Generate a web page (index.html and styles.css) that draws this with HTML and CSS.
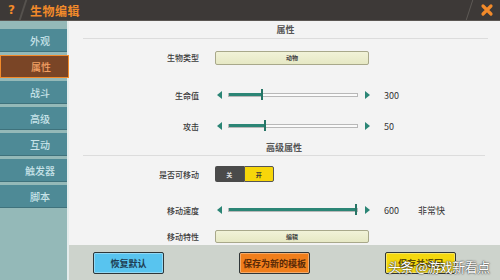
FILE: index.html
```html
<!DOCTYPE html>
<html lang="zh">

<head>
    <meta charset="UTF-8">
    <title>生物编辑</title>
    <link rel="stylesheet" href="styles.css">
</head>

<body>
    <div class="app">
        <!-- top bar -->
        <div class="topbar">
            <span class="help">?</span>
            <span class="slash"></span>
            <span class="title">生物编辑</span>
            <span class="spacer"></span>
            <span class="slash slash-r"></span>
            <svg class="close" width="14" height="14" viewBox="0 0 14 14">
                <path d="M3 3 L11 11 M11 3 L3 11" stroke="#f28a2a" stroke-width="3.2" stroke-linecap="round" />
            </svg>
        </div>

        <div class="content">
            <!-- tabs -->
            <div class="sidebar">
                <div class="tab">外观</div>
                <div class="tab active">属性</div>
                <div class="tab">战斗</div>
                <div class="tab">高级</div>
                <div class="tab">互动</div>
                <div class="tab">触发器</div>
                <div class="tab">脚本</div>
            </div>
            <div class="divider"></div>

            <div class="main">
                <div class="panel">
                    <div class="section-title">属性</div>

                    <div class="row row-type">
                        <span class="label">生物类型</span>
                        <div class="box">动物</div>
                    </div>

                    <div class="row row-hp">
                        <span class="label">生命值</span>
                        <div class="slider">
                            <span class="arr arr-l"></span>
                            <div class="track"><div class="fill" style="width:26%"></div></div>
                            <span class="arr arr-r"></span>
                        </div>
                        <span class="value">300</span>
                    </div>

                    <div class="row row-atk">
                        <span class="label">攻击</span>
                        <div class="slider">
                            <span class="arr arr-l"></span>
                            <div class="track"><div class="fill" style="width:28%"></div></div>
                            <span class="arr arr-r"></span>
                        </div>
                        <span class="value">50</span>
                    </div>

                    <div class="section-title section-adv">高级属性</div>

                    <div class="row row-move">
                        <span class="label">是否可移动</span>
                        <div class="toggle">
                            <span class="off">关</span>
                            <span class="on">开</span>
                        </div>
                    </div>

                    <div class="row row-speed">
                        <span class="label">移动速度</span>
                        <div class="slider">
                            <span class="arr arr-l"></span>
                            <div class="track"><div class="fill" style="width:99%"></div></div>
                            <span class="arr arr-r"></span>
                        </div>
                        <span class="value">600</span>
                        <span class="extra">非常快</span>
                    </div>

                    <div class="row row-trait">
                        <span class="label">移动特性</span>
                        <div class="box box-sm">编辑</div>
                    </div>
                </div>

                <div class="footer">
                    <button class="btn btn-blue">恢复默认</button>
                    <button class="btn btn-orange">保存为新的模板</button>
                    <button class="btn btn-yellow">保存并返回</button>
                    <span class="watermark">头条 @游戏新看点</span>
                </div>
            </div>
        </div>
    </div>
</body>

</html>
```

FILE: styles.css
```css
body {
    margin: 0;
    font-family: "Noto Sans CJK SC", "Noto Sans", sans-serif;
    background: #3c3836;
}

.app {
    width: 500px;
    height: 280px;
    display: flex;
    flex-direction: column;
    overflow: hidden;
}

/* top bar */
.topbar {
    height: 20px;
    background: #3d3937;
    display: flex;
    align-items: center;
    border-bottom: 1px solid #5a5652;
}

.help {
    color: #f28a2a;
    font-family: "DejaVu Sans", sans-serif;
    font-weight: bold;
    font-size: 12px;
    margin-left: 8px;
    width: 10px;
}

.slash {
    width: 2px;
    height: 20px;
    background: #56524e;
    transform: skewX(-18deg);
    margin-left: 4px;
}

.title {
    color: #f28a2a;
    font-weight: bold;
    font-size: 12px;
    margin-left: 6px;
    letter-spacing: 0.5px;
}

.spacer {
    flex: 1;
}

.slash-r {
    background: #5e5a56;
    width: 1px;
    margin-right: 10px;
}

.close {
    margin-right: 6px;
}

.content {
    flex: 1;
    display: flex;
}

/* sidebar */
.sidebar {
    width: 67px;
    background: #94b9b8;
    padding-top: 8px;
}

.tab {
    height: 22px;
    margin-bottom: 3px;
    background: #4e8a96;
    border-bottom: 1px solid #3f727c;
    color: #c6e2e8;
    font-size: 10px;
    font-weight: 500;
    display: flex;
    align-items: center;
    justify-content: center;
    padding-left: 13px;
}

.tab.active {
    background: #7a4526;
    color: #f3a064;
    border: 1px solid #f28a2a;
    height: 21px;
    margin-right: -2px;
    position: relative;
}

.divider {
    width: 2px;
    background: #e4ecec;
}

.main {
    flex: 1;
    display: flex;
    flex-direction: column;
}

/* panel */
.panel {
    height: 224px;
    background: #f3f3f3;
}

.section-title {
    margin: 0 12px 0 14px;
    height: 17px;
    border-bottom: 1px solid #dcdcdc;
    text-align: center;
    font-size: 9px;
    font-weight: bold;
    color: #555;
    line-height: 18px;
}

.section-adv {
    margin-top: 8px;
    height: 13px;
    line-height: 12px;
    margin-right: 15px;
}

.row {
    display: flex;
    align-items: center;
    height: 16px;
}

.label {
    width: 130px;
    margin-right: 16px;
    text-align: right;
    font-size: 8px;
    font-weight: 500;
    color: #3a3a3a;
}

.row-type {
    margin-top: 11px;
    height: 15px;
}

.row-hp {
    margin-top: 22px;
}

.row-atk {
    margin-top: 15px;
}

.row-move {
    margin-top: 10px;
}

.row-speed {
    margin-top: 20px;
}

.row-trait {
    margin-top: 12px;
    height: 13px;
}

.box {
    width: 152px;
    height: 12px;
    background: linear-gradient(#f1f2d8, #e6e8c4);
    border: 1px solid #a8a88a;
    border-radius: 2px;
    font-size: 6px;
    font-weight: bold;
    color: #444;
    text-align: center;
    line-height: 12px;
}

.box-sm {
    height: 11px;
    line-height: 11px;
}

/* slider */
.slider {
    width: 155px;
    display: flex;
    align-items: center;
}

.arr {
    width: 0;
    height: 0;
    border-top: 4px solid transparent;
    border-bottom: 4px solid transparent;
}

.arr-l {
    border-right: 5px solid #2b8575;
    margin-left: 2px;
}

.arr-r {
    border-left: 5px solid #2b8575;
    margin-left: 7px;
}

.track {
    position: relative;
    width: 129px;
    height: 2px;
    margin-left: 6px;
    background: #fafafa;
    border: 1px solid #b8b8b8;
}

.fill {
    position: relative;
    height: 3px;
    margin-top: -1px;
    background: #2b8575;
}

.fill::after {
    content: "";
    position: absolute;
    right: -1px;
    top: -4px;
    width: 2px;
    height: 11px;
    background: #277566;
}

.value {
    width: 34px;
    margin-left: 14px;
    font-size: 9px;
    color: #333;
}

.extra {
    font-size: 9px;
    color: #333;
}

/* toggle */
.toggle {
    display: flex;
    height: 16px;
    width: 59px;
}

.toggle span {
    flex: 1;
    font-size: 6px;
    font-weight: bold;
    display: flex;
    align-items: center;
    justify-content: center;
}

.off {
    background: #4a4a4a;
    color: #ddd;
    border-radius: 2px 0 0 2px;
}

.on {
    background: #f7d60a;
    color: #333;
    border: 1px solid #555;
    border-radius: 0 2px 2px 0;
}

/* footer */
.footer {
    flex: 1;
    background: #cdd3cc;
    display: flex;
    align-items: center;
    padding-left: 24px;
    gap: 75px;
    position: relative;
}

.btn {
    width: 71px;
    height: 22px;
    border: 1.5px solid #2f3638;
    border-radius: 2px;
    font-family: "Noto Sans CJK SC", sans-serif;
    font-size: 9px;
    font-weight: bold;
    padding: 0;
    margin-top: 1px;
    box-shadow: inset 0 0 0 1px rgba(255, 255, 255, 0.35);
    white-space: nowrap;
}

.btn-blue {
    background: #58c4ef;
    color: #1e3d52;
}

.btn-orange {
    background: #f07e1b;
    color: #5a2a08;
}

.btn-yellow {
    background: #f4d80e;
    color: #5a4a05;
}

.watermark {
    position: absolute;
    left: 319px;
    top: 12px;
    font-size: 13px;
    color: #ffffff;
    text-shadow: 0 0 2px #333, 0 0 1px #333;
    letter-spacing: -0.5px;
}
```
